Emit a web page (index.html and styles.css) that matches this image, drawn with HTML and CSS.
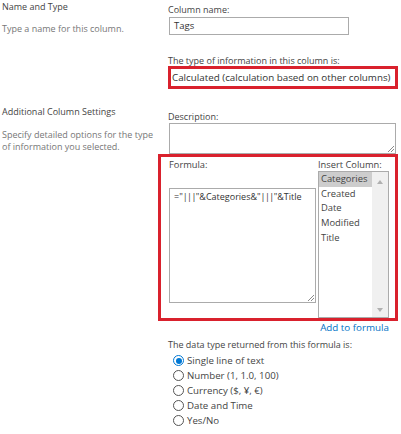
FILE: index.html
```html
<!DOCTYPE html>
<html>
<head>
<meta charset="utf-8">
<link rel="stylesheet" href="styles.css">
</head>
<body>
<div class="page">
  <section class="sec sec1">
    <div class="side">
      <div class="head">Name and Type</div>
      <div class="desc">Type a name for this column.</div>
    </div>
    <div class="main">
      <div class="lbl lbl-name">Column name:</div>
      <div class="input">Tags</div>
      <div class="lbl lbl-type">The type of information in this column is:</div>
      <div class="hl hl-type">Calculated (calculation based on other columns)</div>
    </div>
  </section>
  <section class="sec sec2">
    <div class="side">
      <div class="head">Additional Column Settings</div>
      <div class="desc">Specify detailed options for the type of information you selected.</div>
    </div>
    <div class="main">
      <div class="lbl lbl-desc">Description:</div>
      <div class="textarea desc-box">
        <svg class="grip" width="7" height="7" viewBox="0 0 7 7"><path d="M1 7L7 1M4 7L7 4" stroke="#8a8a8a" stroke-width="1" fill="none"/></svg>
      </div>
      <div class="hl hl-formula">
        <div class="formula-col">
          <div class="lbl lbl-small">Formula:</div>
          <div class="textarea formula-box">="<span class="pipes">|||</span>"&amp;Categories&amp;"<span class="pipes">|||</span>"&amp;Title
            <svg class="grip" width="7" height="7" viewBox="0 0 7 7"><path d="M1 7L7 1M4 7L7 4" stroke="#8a8a8a" stroke-width="1" fill="none"/></svg>
          </div>
        </div>
        <div class="insert-col">
          <div class="lbl lbl-small">Insert Column:</div>
          <div class="listbox">
            <ul class="options">
              <li class="selected">Categories</li>
              <li>Created</li>
              <li>Date</li>
              <li>Modified</li>
              <li>Title</li>
            </ul>
            <div class="scrollbar">
              <span class="arrow arrow-up"></span>
              <span class="arrow arrow-down"></span>
            </div>
          </div>
        </div>
      </div>
      <div class="add-link"><a href="#">Add to formula</a></div>
      <div class="lbl lbl-ret">The data type returned from this formula is:</div>
      <ul class="radios">
        <li><span class="radio checked"></span>Single line of text</li>
        <li><span class="radio"></span>Number (1, 1.0, 100)</li>
        <li><span class="radio"></span>Currency ($, ¥, €)</li>
        <li><span class="radio"></span>Date and Time</li>
        <li><span class="radio"></span>Yes/No</li>
      </ul>
    </div>
  </section>
</div>
</body>
</html>
```

FILE: styles.css
```css
* { box-sizing: border-box; }
html, body { margin: 0; padding: 0; background: #fff; }
body {
  font-family: "Open Sans", "Noto Sans", "Liberation Sans", sans-serif;
  font-size: 9px;
  color: #444;
}
ul { list-style: none; margin: 0; padding: 0; }

.page { width: 401px; }
.sec { display: flex; }
.sec2 { margin-top: 16px; }

.side {
  width: 168px;
  flex: none;
  padding: 0 10px 0 2px;
}
.head { line-height: 14px; color: #444; }
.desc { line-height: 12px; color: #777; }
.sec1 .desc { margin-top: 9px; }
.sec2 .desc { margin-top: 10px; }

.main { flex: 1; }
.sec1 .main { padding-top: 3px; }
.sec2 .main { padding-top: 6px; }

.lbl { line-height: 14px; color: #444; }
.lbl-type { margin-top: 20px; line-height: 11px; }
.lbl-desc { line-height: 12px; }
.lbl-small { line-height: 13px; font-size: 9.3px; }

.input {
  margin-left: 1px;
  width: 180px;
  height: 18px;
  border: 1px solid #ababab;
  padding-left: 4px;
  line-height: 16px;
  font-size: 9.5px;
  color: #333;
}

.hl { border: 3px solid #d9212d; }
.hl-type {
  width: 230px;
  height: 23px;
  padding: 1px 0 0 1px;
  line-height: 16px;
  font-size: 9.8px;
  color: #333;
  white-space: nowrap;
}

.textarea {
  position: relative;
  border: 1px solid #ababab;
  background: #fff;
}
.grip { position: absolute; right: 1px; bottom: 1px; }
.desc-box { margin-left: 1px; width: 227px; height: 31px; }

.hl-formula {
  margin-left: -10px;
  width: 240px;
  height: 167px;
  display: flex;
  gap: 2px;
  padding: 1px 6px 0 8px;
}
.formula-col { width: 147px; }
.formula-box {
  margin-top: 17px;
  height: 115px;
  padding: 1px 4px;
  line-height: 14px;
  color: #333;
  white-space: nowrap;
}
.pipes { letter-spacing: -0.6px; }
.insert-col { width: 71px; }
.listbox {
  display: flex;
  height: 147px;
  border: 1px solid #ababab;
}
.options { flex: 1; }
.options li { line-height: 14.7px; padding-left: 2px; color: #444; font-size: 9.4px; }
.options li.selected { background: #cdcdcd; }
.scrollbar {
  width: 16px;
  flex: none;
  background: #f0f0f0;
  display: flex;
  flex-direction: column;
  justify-content: space-between;
  align-items: center;
  padding: 8px 0 5px;
}
.arrow { width: 0; height: 0; border-left: 3.5px solid transparent; border-right: 3.5px solid transparent; }
.arrow-up { border-bottom: 4px solid #b0b0b0; }
.arrow-down { border-top: 4px solid #b0b0b0; }

.add-link { width: 221px; text-align: right; line-height: 14px; font-size: 9.8px; }
.add-link a { color: #0072c6; text-decoration: none; }
.lbl-ret { margin-top: 3px; }

.radios { margin-top: 1.5px; }
.radios li { display: flex; align-items: center; height: 14.8px; color: #444; font-size: 9.7px; }
.radio {
  width: 11px;
  height: 11px;
  margin: 0 3px 0 5px;
  border: 1px solid #555;
  border-radius: 50%;
  flex: none;
  position: relative;
  background: #fff;
}
.radio.checked { border-color: #0078d4; }
.radio.checked::after {
  content: "";
  position: absolute;
  left: 1.5px; top: 1.5px;
  width: 6px; height: 6px;
  border-radius: 50%;
  background: #0078d4;
}
```
